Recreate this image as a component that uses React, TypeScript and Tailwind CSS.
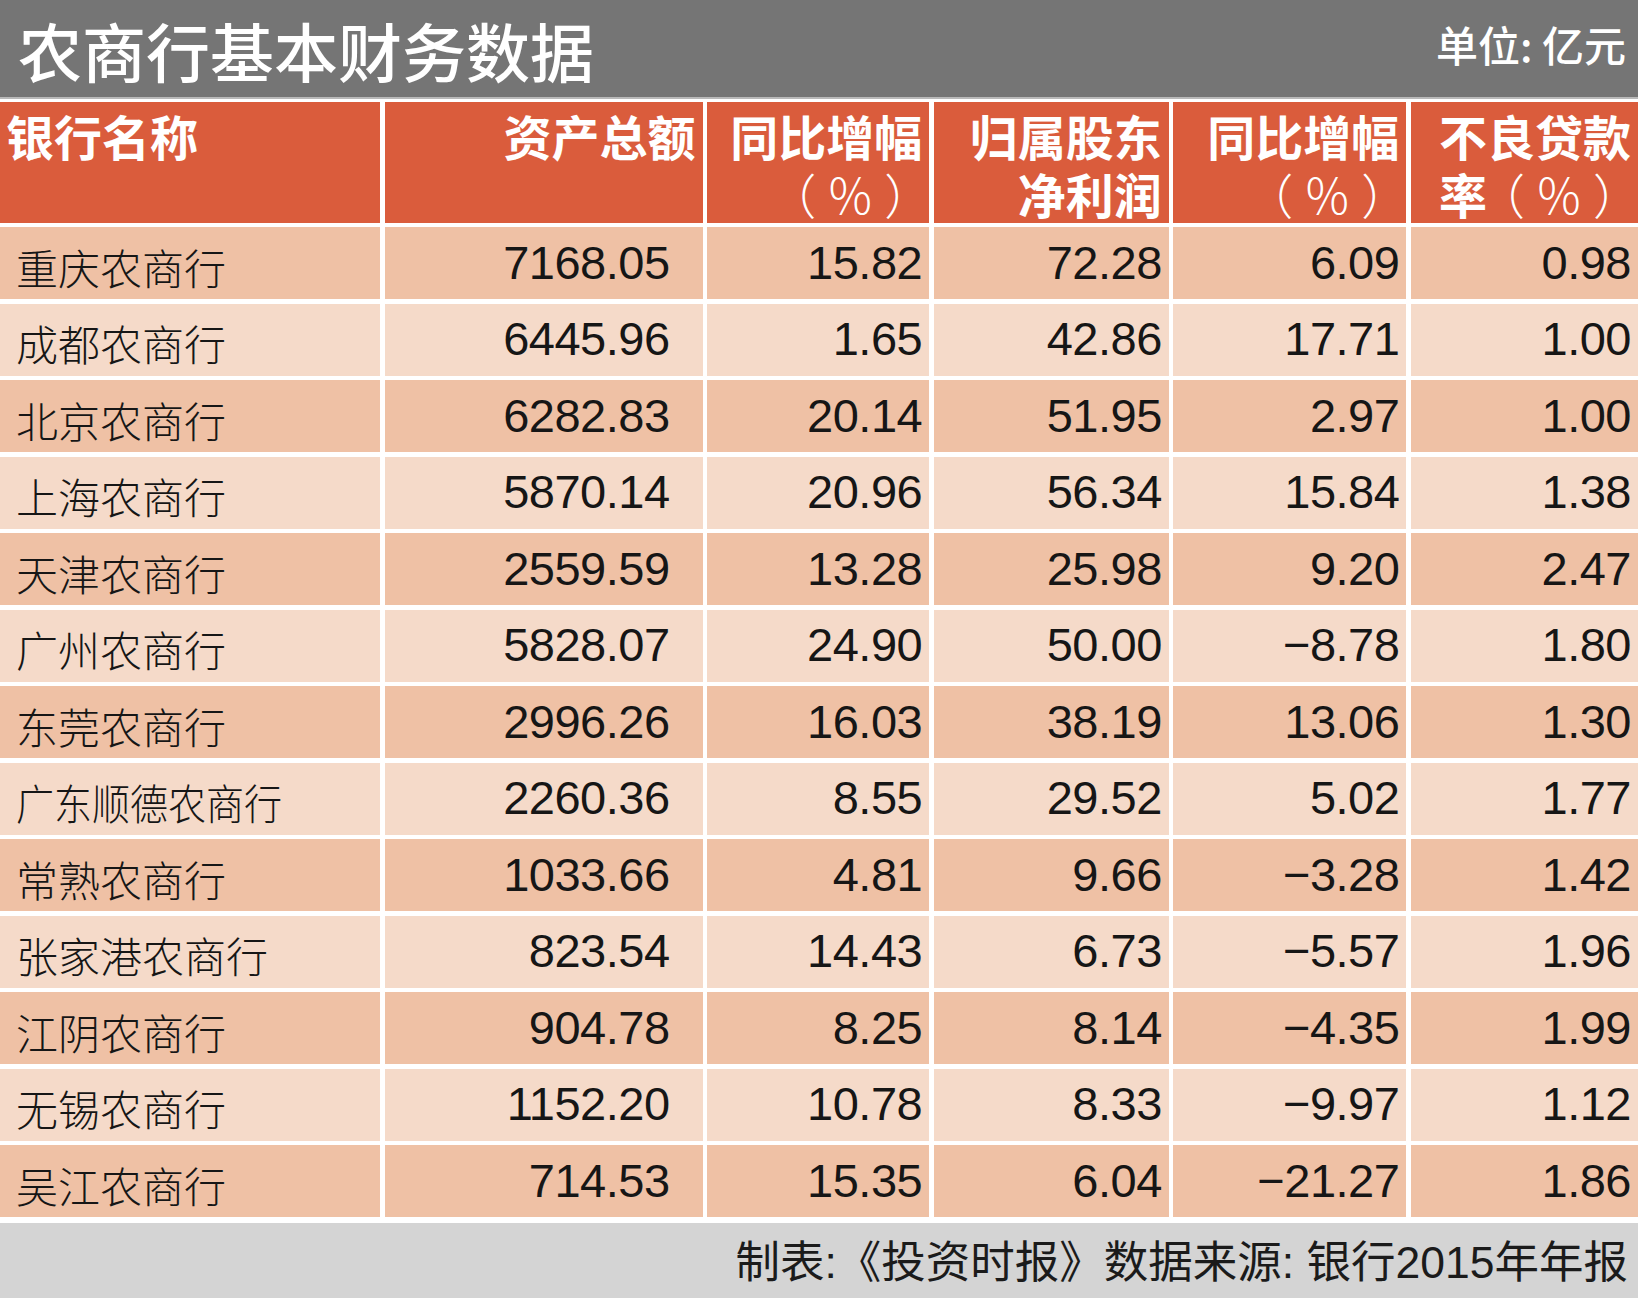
import React from 'react';

const ROWS: string[][] = [
  ['重庆农商行', '7168.05', '15.82', '72.28', '6.09', '0.98'],
  ['成都农商行', '6445.96', '1.65', '42.86', '17.71', '1.00'],
  ['北京农商行', '6282.83', '20.14', '51.95', '2.97', '1.00'],
  ['上海农商行', '5870.14', '20.96', '56.34', '15.84', '1.38'],
  ['天津农商行', '2559.59', '13.28', '25.98', '9.20', '2.47'],
  ['广州农商行', '5828.07', '24.90', '50.00', '−8.78', '1.80'],
  ['东莞农商行', '2996.26', '16.03', '38.19', '13.06', '1.30'],
  ['广东顺德农商行', '2260.36', '8.55', '29.52', '5.02', '1.77'],
  ['常熟农商行', '1033.66', '4.81', '9.66', '−3.28', '1.42'],
  ['张家港农商行', '823.54', '14.43', '6.73', '−5.57', '1.96'],
  ['江阴农商行', '904.78', '8.25', '8.14', '−4.35', '1.99'],
  ['无锡农商行', '1152.20', '10.78', '8.33', '−9.97', '1.12'],
  ['吴江农商行', '714.53', '15.35', '6.04', '−21.27', '1.86'],
];

const CJK = { fontFamily: '"Noto Sans CJK SC", sans-serif' };
const NUM = { fontFamily: '"Liberation Sans", "Noto Sans CJK SC", sans-serif' };

// parens sit wider apart in the original font
const Pct = () => (
  <span className="font-light">
    <span className="relative -left-[10px]">（</span>％<span className="relative left-[10px]">）</span>
  </span>
);

const HeadCell: React.FC<{ right?: boolean; children: React.ReactNode }> = ({ right, children }) => (
  <div
    className={`bg-[#da5c3c] h-[121px] pt-[4px] text-white font-bold text-[48px] leading-[58px] ${
      right ? 'text-right pr-[7px]' : 'text-left pl-[6px]'
    }`}
    style={CJK}
  >
    {children}
  </div>
);

export default function App() {
  return (
    <div className="w-[1638px] h-[1298px] bg-white flex flex-col overflow-hidden">
      <div className="h-[97px] bg-[#757575] flex items-start justify-between pl-[18px] pr-[12px] text-white" style={CJK}>
        <div className="text-[64px] leading-none font-medium pt-[17px]">农商行基本财务数据</div>
        <div className="text-[42px] leading-none font-medium pt-[23px]">单位: 亿元</div>
      </div>
      <div className="h-[2px] bg-[#b9b9b9]" />
      <div className="grid grid-cols-[380px_318px_222px_235px_233px_1fr] gap-x-[4.6px] gap-y-[4.5px] pt-[2.7px]">
        <HeadCell>银行名称</HeadCell>
        <HeadCell right>资产总额</HeadCell>
        <HeadCell right>
          <div>同比增幅</div>
          <div>
            <Pct />
          </div>
        </HeadCell>
        <HeadCell right>
          <div>归属股东</div>
          <div>净利润</div>
        </HeadCell>
        <HeadCell right>
          <div>同比增幅</div>
          <div>
            <Pct />
          </div>
        </HeadCell>
        <HeadCell right>
          <div>不良贷款</div>
          <div>
            率<Pct />
          </div>
        </HeadCell>

        {ROWS.map((r, i) => {
          const bg = i % 2 === 0 ? 'bg-[#efc1a5]' : 'bg-[#f5dac9]';
          const long = r[0].length > 6;
          return (
            <React.Fragment key={r[0]}>
              <div className={`${bg} h-[72px] flex items-center pl-[16px] text-[42px] font-light text-[#161616]`} style={CJK}>
                <span className={`translate-y-[3px] origin-left ${long ? 'scale-x-[0.905]' : ''}`}>{r[0]}</span>
              </div>
              {r.slice(1).map((v, j) => (
                <div
                  key={j}
                  className={`${bg} h-[72px] flex items-center justify-end text-[47px] tracking-[-0.5px] text-[#161616] ${
                    j === 0 ? 'pr-[33px]' : 'pr-[7px]'
                  }`}
                  style={NUM}
                >
                  {v}
                </div>
              ))}
            </React.Fragment>
          );
        })}
      </div>
      <div className="mt-[5.4px] flex-1 bg-[#d4d4d4] flex items-center justify-end pr-[10px] text-[44.5px] text-[#1b1b1b]" style={NUM}>
        <span className="translate-y-[3px]">制表:《投资时报》数据来源: 银行2015年年报</span>
      </div>
    </div>
  );
}
